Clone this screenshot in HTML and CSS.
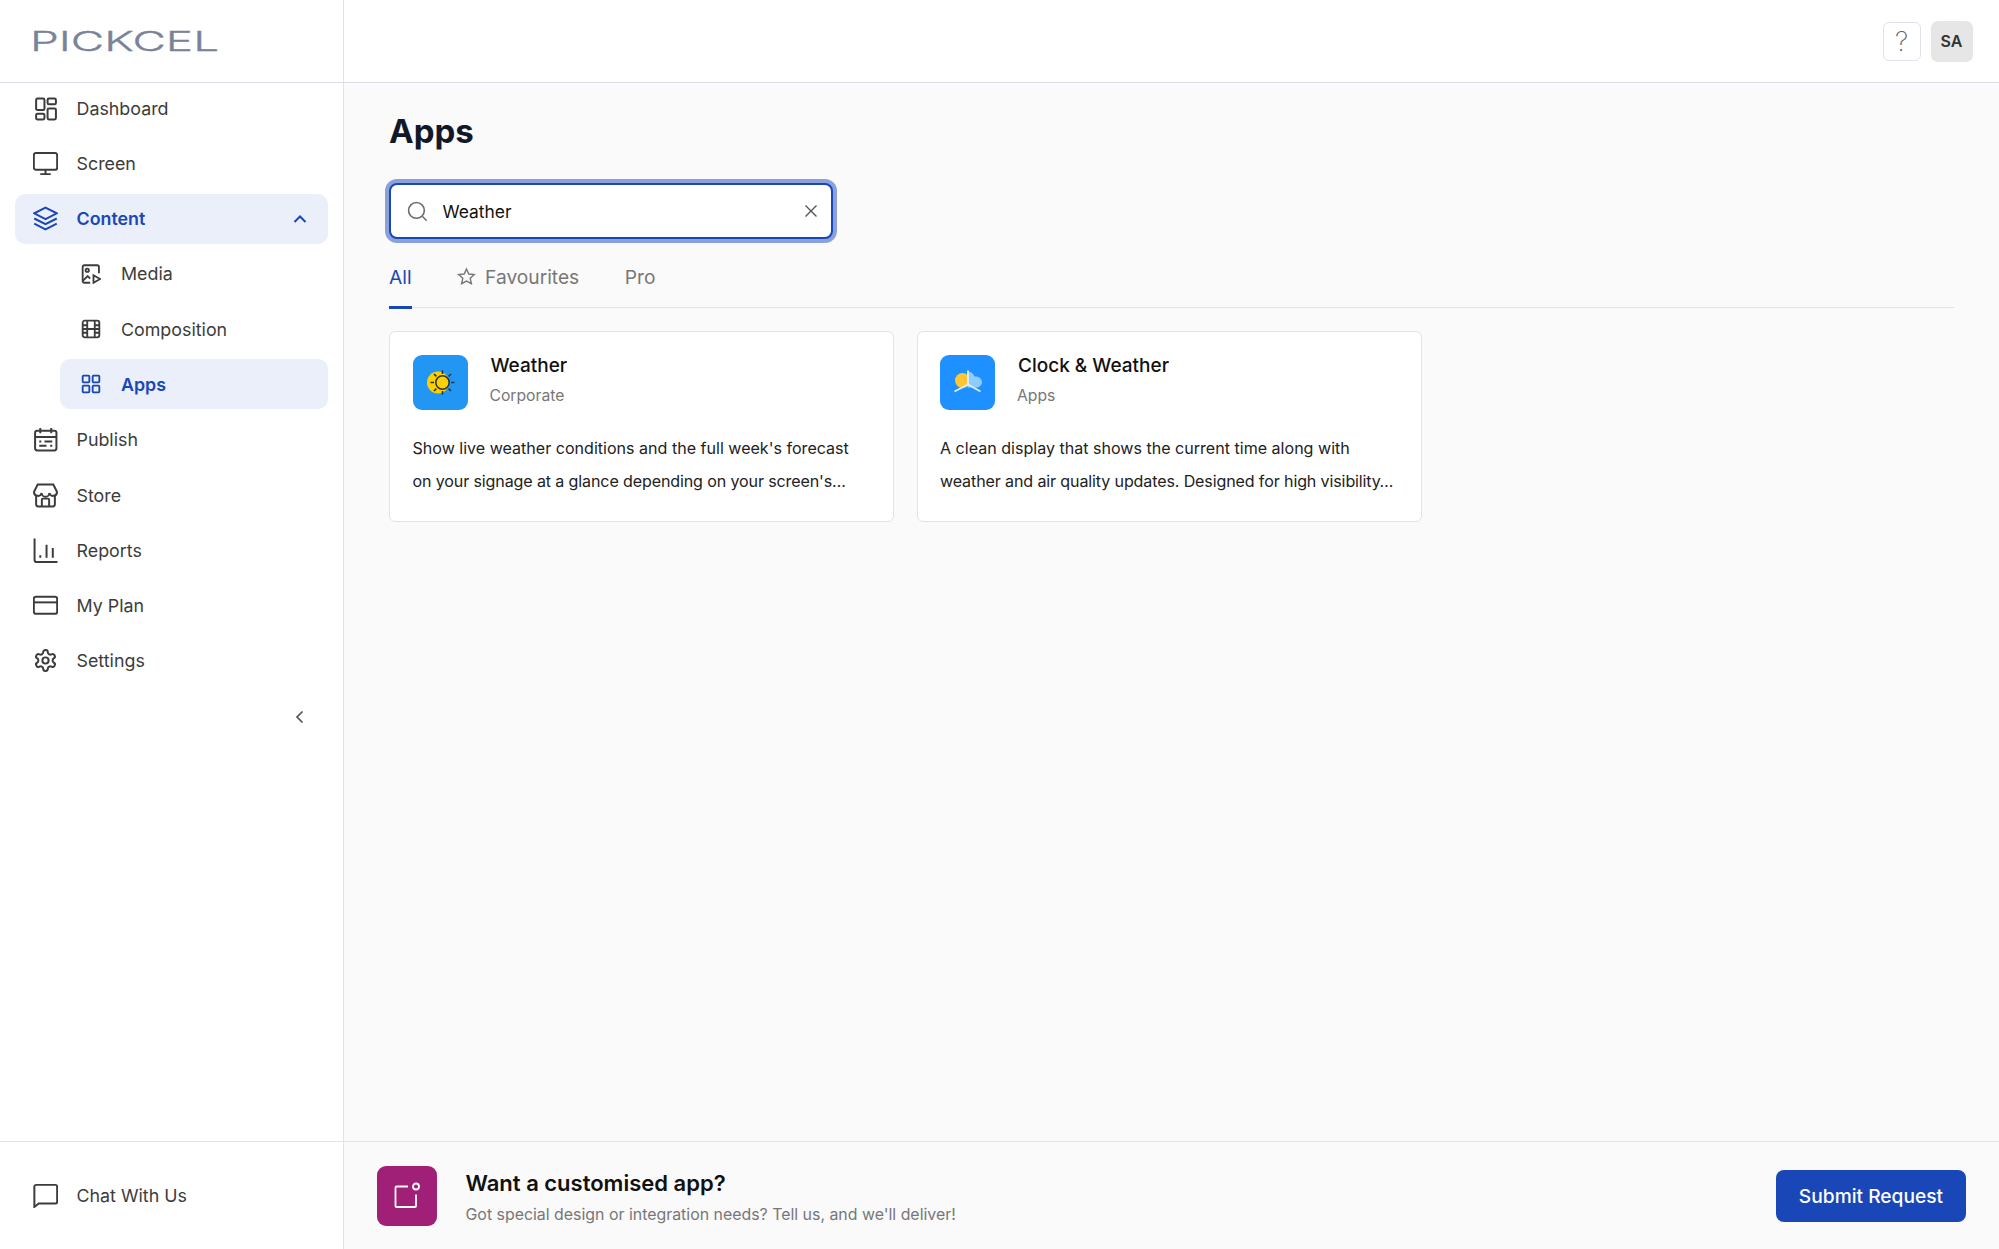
FILE: index.html
```html
<!DOCTYPE html>
<html lang="en">
<head>
    <meta charset="UTF-8">
    <title>Apps - Pickcel</title>
    <link rel="stylesheet" href="styles.css">
</head>
<body>
    <aside class="sidebar">
        <div class="logo-bar"><span class="logo">PICKCEL</span></div>
        <nav class="nav">
            <a class="nav-item">
                <svg class="icon" viewBox="0 0 24 24"><rect x="3" y="2.500" width="8" height="11" rx="1.300"/><rect x="3" y="17" width="8" height="5.500" rx="1.300"/><rect x="14" y="2.500" width="8" height="5.500" rx="1.300"/><rect x="14" y="12" width="8" height="10.500" rx="1.300"/></svg>
                Dashboard
            </a>
            <a class="nav-item">
                <svg class="icon" viewBox="0 0 24 24"><rect x="0.800" y="2" width="22.400" height="16" rx="2"/><path d="M12 18v4M7 22.200h10"/></svg>
                Screen
            </a>
            <a class="nav-item active">
                <svg class="icon" viewBox="0 0 24 24"><path d="M12 1.500 22.800 7 12 12.500 1.200 7z"/><path d="M1.200 12 12 17.500 22.800 12"/><path d="M1.200 17 12 22.500 22.800 17"/></svg>
                Content
                <svg class="caret" viewBox="0 0 16 16"><path d="M2.500 11 8 5.500l5.500 5.500"/></svg>
            </a>
            <a class="nav-item sub">
                <svg class="icon" viewBox="0 0 24 24"><path d="M11 22.500H4a2 2 0 0 1-2-2v-17a2 2 0 0 1 2-2h15.500a2 2 0 0 1 2 2V11"/><circle cx="7.500" cy="7.500" r="2"/><path d="M2.500 20 8 14.500l3 3"/><path d="M15 13.500v9l8-4.500z"/></svg>
                Media
            </a>
            <a class="nav-item sub">
                <svg class="icon" viewBox="0 0 24 24"><rect x="2" y="2" width="20" height="20" rx="2.500"/><path d="M7.500 2v20M16.500 2v20M2 7.500h5.500M2 12h20M2 16.500h5.500M16.500 7.500H22M16.500 16.500H22"/></svg>
                Composition
            </a>
            <a class="nav-item sub active">
                <svg class="icon" viewBox="0 0 24 24"><rect x="2" y="2" width="8" height="8" rx="1"/><rect x="14" y="2" width="8" height="8" rx="1"/><rect x="2" y="14" width="8" height="8" rx="1"/><rect x="14" y="14" width="8" height="8" rx="1"/></svg>
                Apps
            </a>
            <a class="nav-item">
                <svg class="icon" viewBox="0 0 24 24"><rect x="2" y="3.500" width="20.500" height="19" rx="2"/><path d="M2 9.500h20.500M7 1v5M17.500 1v5M6 14h2M11 14h7.500M6 18h7M16.500 18h2"/></svg>
                Publish
            </a>
            <a class="nav-item">
                <svg class="icon" viewBox="0 0 24 24"><path d="M4.500 1.500h15L23 8.500a3.700 3.700 0 0 1-7.300 1 3.700 3.700 0 0 1-7.400 0 3.700 3.700 0 0 1-7.300-1z"/><path d="M3 12.500V20.500a2 2 0 0 0 2 2h14a2 2 0 0 0 2-2v-8"/><path d="M8.500 22.500V16a1 1 0 0 1 1-1h5a1 1 0 0 1 1 1v6.500"/></svg>
                Store
            </a>
            <a class="nav-item">
                <svg class="icon" viewBox="0 0 24 24"><path d="M1.500 0.500V21a2 2 0 0 0 2 2h20"/><path d="M7 16.500v2.500M13 6.500v12.500M19 9.500v9.500"/></svg>
                Reports
            </a>
            <a class="nav-item">
                <svg class="icon" viewBox="0 0 24 24"><rect x="0.800" y="3.500" width="22.400" height="16.500" rx="2"/><path d="M0.800 9h22.400"/></svg>
                My Plan
            </a>
            <a class="nav-item">
                <svg class="icon" viewBox="0 0 24 24"><path d="M12.220 2h-.44a2 2 0 0 0-2 2v.18a2 2 0 0 1-1 1.730l-.43.25a2 2 0 0 1-2 0l-.15-.08a2 2 0 0 0-2.730.73l-.22.38a2 2 0 0 0 .73 2.730l.15.1a2 2 0 0 1 1 1.720v.51a2 2 0 0 1-1 1.740l-.15.09a2 2 0 0 0-.73 2.730l.22.38a2 2 0 0 0 2.730.73l.15-.08a2 2 0 0 1 2 0l.43.25a2 2 0 0 1 1 1.730V20a2 2 0 0 0 2 2h.44a2 2 0 0 0 2-2v-.18a2 2 0 0 1 1-1.730l.43-.25a2 2 0 0 1 2 0l.15.08a2 2 0 0 0 2.730-.73l.22-.39a2 2 0 0 0-.73-2.730l-.15-.08a2 2 0 0 1-1-1.740v-.5a2 2 0 0 1 1-1.740l.15-.09a2 2 0 0 0 .73-2.730l-.22-.38a2 2 0 0 0-2.730-.73l-.15.08a2 2 0 0 1-2 0l-.43-.25a2 2 0 0 1-1-1.730V4a2 2 0 0 0-2-2z"/><circle cx="12" cy="12" r="3"/></svg>
                Settings
            </a>
            <div class="collapse-row">
                <svg class="collapse" viewBox="0 0 16 16"><path d="M10.500 2.500 5 8l5.500 5.500"/></svg>
            </div>
        </nav>
        <div class="chat-bar">
            <a class="nav-item">
                <svg class="icon" viewBox="0 0 24 24"><path d="M3 1.800h18.500a1.700 1.700 0 0 1 1.700 1.700V18a1.700 1.700 0 0 1-1.700 1.700H5.500L1.300 23V3.500A1.700 1.700 0 0 1 3 1.800z"/></svg>
                Chat With Us
            </a>
        </div>
    </aside>

    <div class="main">
        <header class="topbar">
            <button class="help">?</button>
            <div class="avatar">SA</div>
        </header>

        <section class="content">
            <h1>Apps</h1>
            <div class="search">
                <svg class="search-icon" viewBox="0 0 24 24"><circle cx="10.800" cy="10.800" r="9"/><path d="m17.500 17.500 5 5"/></svg>
                <span class="search-text">Weather</span>
                <svg class="clear-icon" viewBox="0 0 14 14"><path d="M1.500 1.500l11 11M12.500 1.500l-11 11"/></svg>
            </div>
            <div class="tabs">
                <a class="tab current">All</a>
                <a class="tab fav">
                    <svg class="star" viewBox="0 0 24 24"><path d="M12 2.500l2.900 6.300 6.900.8-5.100 4.700 1.400 6.800-6.100-3.400-6.100 3.400 1.400-6.800-5.100-4.700 6.900-.8z"/></svg>
                    Favourites
                </a>
                <a class="tab pro">Pro</a>
            </div>
            <div class="cards">
                <div class="card">
                    <div class="card-head">
                        <div class="app-icon weather-icon">
                            <svg viewBox="0 0 55 55">
                                <circle cx="25" cy="27.500" r="11" fill="#ffd000"/>
                                <g fill="none" stroke="#263445" stroke-width="1.600">
                                    <circle cx="29.500" cy="27.500" r="6.700"/>
                                    <path d="M29.500 15.500v3.500M29.500 36v3.500M17.500 27.500H21M38 27.500h3.500M21 19l2.400 2.400M35.600 33.600l2.400 2.400M21 36l2.400-2.400M35.600 21.400 38 19"/>
                                </g>
                            </svg>
                        </div>
                        <div>
                            <div class="card-title">Weather</div>
                            <div class="card-cat">Corporate</div>
                        </div>
                    </div>
                    <p class="card-desc">Show live weather conditions and the full week's forecast<br><span class="clamped">on your signage at a glance depending on your screen's…</span></p>
                </div>
                <div class="card">
                    <div class="card-head">
                        <div class="app-icon clock-icon">
                            <svg viewBox="0 0 55 55">
                                <circle cx="22.500" cy="25.500" r="7.500" fill="#ffc533"/>
                                <path d="M27.500 16.500c3.500 0 6 2 7 5 4-.5 7.500 2 7.500 5.500s-3 5.500-6 5.500h-8.500z" fill="#8fcbff"/>
                                <path d="M28 15.500V29.500L14.500 36.500M28 29.500 40.500 36.500" fill="none" stroke="#d9eeff" stroke-width="1.900"/>
                            </svg>
                        </div>
                        <div>
                            <div class="card-title">Clock &amp; Weather</div>
                            <div class="card-cat">Apps</div>
                        </div>
                    </div>
                    <p class="card-desc">A clean display that shows the current time along with<br><span class="clamped">weather and air quality updates. Designed for high visibility…</span></p>
                </div>
            </div>
        </section>

        <footer class="request-bar">
            <div class="request-icon">
                <svg viewBox="0 0 30 30"><path d="M16 5.500H4.500a1 1 0 0 0-1 1V25a1 1 0 0 0 1 1H23a1 1 0 0 0 1-1V13.500"/><circle cx="24" cy="5.500" r="3"/></svg>
            </div>
            <div class="request-text">
                <div class="request-title">Want a customised app?</div>
                <div class="request-sub">Got special design or integration needs? Tell us, and we'll deliver!</div>
            </div>
            <button class="submit">Submit Request</button>
        </footer>
    </div>
</body>
</html>
```

FILE: styles.css
```css
* {
    box-sizing: border-box;
    margin: 0;
    padding: 0;
    font-family: Inter, "Liberation Sans", sans-serif;
}
body {
    display: flex;
    height: 100vh;
    overflow: hidden;
    background: #fafafa;
    color: #3c3c3c;
}
.sidebar {
    display: flex;
    flex-direction: column;
    flex: 0 0 344px;
    background: white;
    border-right: 1px solid #e0e3ee;
}
.logo-bar {
    display: flex;
    align-items: center;
    height: 83px;
    margin-right: -1px;
    padding-left: 30px;
    border-bottom: 1px solid #d9deea;
}
.logo {
    display: block;
    font-size: 27px;
    font-weight: 300;
    line-height: 1;
    color: #7a8298;
    -webkit-text-stroke: 0.3px #7a8298;
    transform: scaleX(1.7);
    transform-origin: left center;
}
.nav {
    flex: 1;
    display: flex;
    flex-direction: column;
    gap: 5.300px;
    padding: 0 15px;
}
.nav-item {
    display: flex;
    align-items: center;
    gap: 18.500px;
    height: 50px;
    padding-left: 18px;
    border-radius: 10px;
    font-size: 17.850px;
    color: #3c3c3c;
}
.nav-item.active {
    background: #eaeff9;
    color: #1a47b8;
    font-weight: 600;
}
.nav-item.sub {
    margin-left: 45px;
    padding-left: 21px;
    gap: 20px;
}
.icon {
    flex: none;
    width: 25px;
    height: 25px;
    fill: none;
    stroke: currentColor;
    stroke-width: 1.900;
}
.sub .icon {
    width: 20px;
    height: 20px;
    stroke-width: 2.200;
}
.caret {
    width: 16px;
    height: 16px;
    margin-left: auto;
    margin-right: 20px;
    fill: none;
    stroke: currentColor;
    stroke-width: 2;
}
.collapse-row {
    display: flex;
    justify-content: flex-end;
    padding: 18px 20px 0 0;
}
.collapse {
    width: 16px;
    height: 16px;
    fill: none;
    stroke: #555;
    stroke-width: 1.700;
}
.chat-bar {
    display: flex;
    align-items: center;
    height: 108px;
    margin-right: -1px;
    padding: 0 15px;
    border-top: 1px solid #e0e3ee;
}
.main {
    flex: 1;
    display: flex;
    flex-direction: column;
    min-width: 0;
}
.topbar {
    display: flex;
    align-items: center;
    justify-content: flex-end;
    gap: 10px;
    height: 83px;
    padding-right: 26.500px;
    background: white;
    border-bottom: 1px solid #d9deea;
}
.help {
    width: 38px;
    height: 39px;
    background: white;
    border: 1.500px solid #e0e3ee;
    border-radius: 6px;
    font-size: 27px;
    font-weight: 200;
    color: #666;
}
.avatar {
    display: flex;
    align-items: center;
    justify-content: center;
    width: 42px;
    height: 41px;
    background: #e6e6e6;
    border-radius: 7px;
    font-size: 16px;
    font-weight: 600;
    color: #333;
}
.content {
    flex: 1;
    padding: 27px 45px 0;
}
h1 {
    font-size: 33px;
    font-weight: 700;
    line-height: 42px;
    color: #111827;
}
.search {
    display: flex;
    align-items: center;
    width: 444px;
    height: 56px;
    margin-top: 31px;
    padding: 0 13px 0 16px;
    background: white;
    border: 2px solid #1a47b8;
    border-radius: 8px;
    box-shadow: 0 0 0 4px #8aa1dc;
}
.search-icon {
    width: 21px;
    height: 21px;
    fill: none;
    stroke: #6b6b6b;
    stroke-width: 1.800;
}
.search-text {
    margin-left: 14.500px;
    font-size: 17.400px;
    color: #111;
}
.clear-icon {
    width: 14px;
    height: 14px;
    margin-left: auto;
    fill: none;
    stroke: #555;
    stroke-width: 1.400;
}
.tabs {
    display: flex;
    align-items: center;
    gap: 45.500px;
    height: 67px;
    margin-top: 2px;
    padding-top: 5px;
    border-bottom: 1.500px solid #e0e3ee;
}
.tab {
    position: relative;
    display: flex;
    align-items: center;
    gap: 9px;
    height: 100%;
    font-size: 19.200px;
    color: #777;
}
.tab.current {
    color: #1a47b8;
}
.tab.current::after {
    content: "";
    position: absolute;
    left: 0;
    right: 0;
    bottom: -1.500px;
    height: 3px;
    background: #1a47b8;
}
.star {
    width: 19px;
    height: 19px;
    fill: none;
    stroke: #777;
    stroke-width: 1.800;
}
.cards {
    display: flex;
    gap: 22.500px;
    margin-top: 22.500px;
}
.card {
    width: 505px;
    height: 191px;
    padding: 22px 23px 22px 22.500px;
    background: white;
    border: 1.500px solid #e0e3ee;
    border-radius: 6px;
}
.card-head {
    display: flex;
    gap: 23px;
    align-items: flex-start;
}
.app-icon {
    flex: none;
    width: 55px;
    height: 55px;
    margin-top: 1px;
    border-radius: 9px;
    overflow: hidden;
}
.app-icon svg {
    display: block;
}
.weather-icon {
    background: #2196f3;
}
.clock-icon {
    background: #1e90ff;
}
.card-title {
    font-size: 19px;
    font-weight: 500;
    line-height: 24px;
    color: #111;
}
.card-cat {
    margin-top: 6.500px;
    margin-left: -1px;
    font-size: 15.700px;
    line-height: 24px;
    color: #777;
}
.card-desc {
    margin-top: 22px;
    font-size: 16.070px;
    line-height: 33.400px;
    color: #222;
    white-space: nowrap;
}
.clamped {
    letter-spacing: -0.130px;
}
.request-bar {
    display: flex;
    align-items: center;
    height: 108px;
    padding: 0 33px 0 33px;
    border-top: 1px solid #e0e3ee;
}
.request-icon {
    display: flex;
    align-items: center;
    justify-content: center;
    width: 60px;
    height: 60px;
    background: #a01f77;
    border-radius: 9px;
}
.request-icon svg {
    width: 30px;
    height: 30px;
    fill: none;
    stroke: white;
    stroke-width: 1.800;
}
.request-text {
    flex: 1;
    margin-left: 28.500px;
    padding-top: 4px;
}
.request-title {
    font-size: 22px;
    font-weight: 600;
    line-height: 30px;
    color: #111;
}
.request-sub {
    margin-top: 5px;
    font-size: 15.900px;
    line-height: 24px;
    color: #777;
}
.submit {
    width: 190px;
    height: 52px;
    background: #1a47b8;
    border: none;
    border-radius: 8px;
    font-size: 19.200px;
    font-weight: 450;
    color: white;
}
```
